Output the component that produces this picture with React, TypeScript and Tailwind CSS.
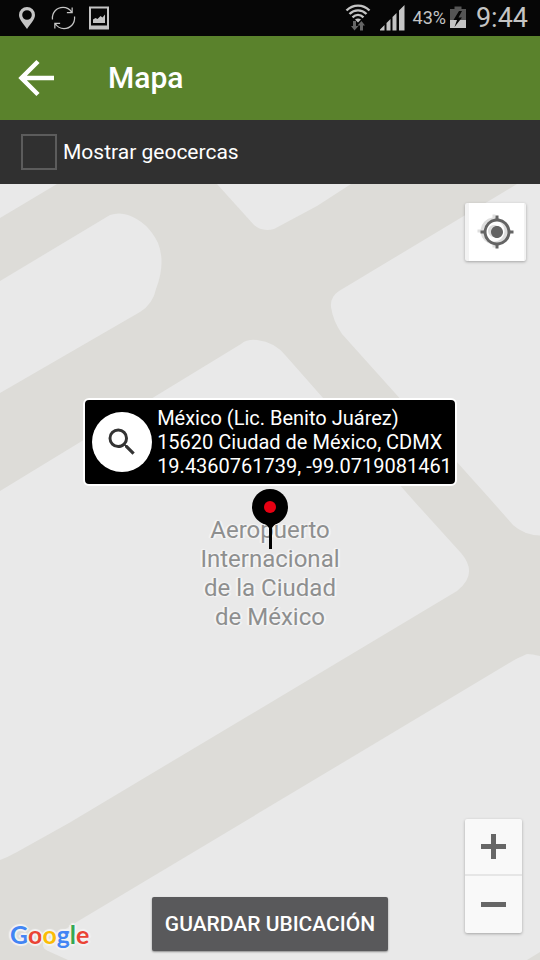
import React from "react";
import { MdMyLocation, MdSearch } from "react-icons/md";

function StatusBar() {
  return (
    <div className="flex h-9 shrink-0 items-center justify-between bg-[#060606] pr-3 pl-4 text-[#c4c4c4]">
      <div className="flex items-center gap-[13px]">
        <svg className="h-6 w-[22px]" viewBox="0 0 22 24" fill="currentColor" aria-hidden="true">
          <path
            fillRule="evenodd"
            d="M11 1a8 8 0 0 0-8 8c0 5 5 9 8 14 3-5 8-9 8-14a8 8 0 0 0-8-8Zm0 3.200a4.800 4.800 0 1 1 0 9.600a4.800 4.800 0 0 1 0-9.600Z"
          />
        </svg>
        <svg className="h-6 w-[25px]" viewBox="0 0 26 24" fill="none" stroke="currentColor" strokeWidth="1.300" aria-hidden="true">
          <path d="M1.500 13.500C.8 6 6 1 12.500 1c4 0 7 1.800 9 5M22 1v5.500h-5.500" />
          <path d="M24.500 10.500C25.200 18 20 23 13.500 23c-4 0-7-1.800-9-5M4 23v-5.500h5.500" />
        </svg>
        <svg className="h-6 w-5" viewBox="0 0 20 24" fill="currentColor" aria-hidden="true">
          <path fillRule="evenodd" d="M0 .5h20v23H0ZM2 2.500v17h16v-17Z" />
          <path d="M4 17v-3.500l2.500-1.500 2 1 3-3 2 1.500L16 8.500V17Z" />
        </svg>
      </div>
      <div className="flex items-center">
        <svg className="mr-2 h-7 w-[26px]" viewBox="0 0 26 28" fill="none" aria-hidden="true">
          <g stroke="currentColor" strokeWidth="2.400">
            <path d="M1.500 6.500c6.500-6.500 16.500-6.500 23 0" />
            <path d="M4.500 10c5-4.800 12-4.800 17 0" />
            <path d="M7.500 13.300c3.300-3 7.700-3 11 0" />
          </g>
          <path d="M10 15.500c2-1.500 4-1.500 6 0L13 18.500Z" fill="currentColor" />
          <path d="M8 17h3v5h2.500L9.500 26.500 6 22h2ZM15 26.500v-5h-2.500l4-4.500 3.500 4.500h-2v5Z" fill="#666" />
        </svg>
        <svg className="mr-2 h-[26px] w-[26px]" viewBox="0 0 26 26" fill="currentColor" aria-hidden="true">
          <path d="M1 25.500v-1L5.500 20v5.500ZM7.500 25.500V18l4-4v11.500ZM13.500 25.500V12l4-4v17.500ZM20 25.500V5.500L25.500 0v25.500Z" />
        </svg>
        <span className="mr-1 text-[18px] leading-9">43%</span>
        <svg className="mr-[10px] h-6 w-4" viewBox="0 0 16 24" aria-hidden="true">
          <path d="M0 3h4.500V.5h7V3H16v11H0Z" fill="#555" />
          <path d="M0 14h16v8H0Z" fill="#c4c4c4" />
          <path d="M9 5 3.500 14H7l-2.500 7L12 11.500H8.500L12 5Z" fill="#060606" />
        </svg>
        <span className="text-[27px] leading-9">9:44</span>
      </div>
    </div>
  );
}

function Terrain() {
  return (
    <svg
      className="absolute inset-0 h-full w-full"
      viewBox="0 184 540 776"
      preserveAspectRatio="xMidYMid slice"
      fill="#e9e9e9"
      aria-hidden="true"
    >
      <rect y="184" width="540" height="776" fill="#dddcd8" />
      <path d="M0 184H57L0 218Z" />
      <path d="M0 281 110 215Q119 212 128 215Q148 222 158 243Q166 263 156 289Q153 304 140 312L0 393Z" />
      <path d="M217 184 254 225Q262 232 274 229L317 206 351 184Z" />
      <path d="M517 184 339 291Q330 297 331 307Q333 321 342 334L491 500 513 525Q524 535 540 535.500V184Z" />
      <path d="M0 491 241 344Q247 339 257 340Q275 342 286 356L413 500 461 553Q479 574 457 591L69 823 17 852Q8 857 0 860Z" />
      <path d="M540 656Q532 654 527 654L516 659 80 920 43 943Q42 948 48 951L68 960H527L540 952Z" />
    </svg>
  );
}

const placeLines = ["Aeropuerto", "Internacional", "de la Ciudad", "de México"];

export default function App() {
  return (
    <div className="flex min-h-screen flex-col bg-[#e9e9e9] font-['Roboto',sans-serif]">
      <StatusBar />
      <header className="flex h-[84px] shrink-0 items-center gap-[52px] bg-[#5a822c] pl-[18px] text-white">
        <button type="button" aria-label="Atrás">
          <svg className="h-10 w-[38px]" viewBox="0 0 38 40" fill="none" stroke="currentColor" strokeWidth="4.500" aria-hidden="true">
            <path d="M36 20H3M20 3.500 3.500 20 20 36.500" />
          </svg>
        </button>
        <h1 className="text-[30px] leading-9 font-medium">Mapa</h1>
      </header>
      <div className="flex h-16 shrink-0 items-center bg-[#303030] pl-[21px] text-white">
        <label className="flex items-center gap-[6px] text-[21px] leading-6">
          <input type="checkbox" className="h-9 w-9 appearance-none border-2 border-[#5c5c5c] checked:bg-[#5a822c]" />
          Mostrar geocercas
        </label>
      </div>

      <main className="relative min-h-[640px] flex-1 overflow-hidden">
        <Terrain />

        <div className="absolute inset-x-0 top-[332px] text-center text-[24px] leading-[29px] text-[#8e8f8f] [text-shadow:0_0_2px_#f5f5f5,1px_1px_1px_#f5f5f5,-1px_-1px_1px_#f5f5f5,2px_0_1px_#f5f5f5,-2px_0_1px_#f5f5f5]">
          {placeLines.map((line) => (
            <div key={line}>{line}</div>
          ))}
        </div>

        <div className="absolute inset-x-0 top-[214px] flex flex-col items-center gap-[3px]">
          <div className="flex items-center gap-[5px] rounded-md border-2 border-white bg-black py-[6px] pr-[3px] pl-[7px] text-white">
            <button type="button" aria-label="Buscar" className="flex h-[60px] w-[60px] items-center justify-center rounded-full bg-white text-[#333]">
              <MdSearch size={36} />
            </button>
            <div className="text-[20px] leading-6 whitespace-nowrap">
              <p>México (Lic. Benito Juárez)</p>
              <p>15620 Ciudad de México, CDMX</p>
              <p>19.4360761739, -99.0719081461</p>
            </div>
          </div>
          <svg className="h-[60px] w-9" viewBox="0 0 36 60" role="img" aria-label="Ubicación">
            <circle cx="18" cy="18" r="18" />
            <path d="M9 33q6 2 8 6v21h3V39q2-4 8-6Z" />
            <circle cx="18" cy="18" r="6" fill="#e60012" />
          </svg>
        </div>

        <button
          type="button"
          aria-label="Mi ubicación"
          className="absolute top-[19px] right-[14px] flex h-[58px] w-[61px] items-center justify-center rounded-xs border-r-2 border-l-4 border-[#f3f3f3] bg-white text-[#646464] shadow-[0_1px_3px_#0000004d]"
        >
          <MdMyLocation size={36} className="absolute top-[10px] left-[7px] text-[#dedede]" />
          <MdMyLocation size={36} className="relative" />
        </button>

        <div className="absolute right-[18px] bottom-[27px] flex w-[57px] flex-col divide-y-2 divide-[#e6e6e6] rounded-xs bg-[#f9f9f9] text-[#666] shadow-[0_1px_3px_#0000004d]">
          <button type="button" aria-label="Acercar" className="flex h-[57px] items-center justify-center">
            <svg className="h-[25px] w-[25px]" viewBox="0 0 25 25" fill="currentColor" aria-hidden="true">
              <path d="M10 0h5v10h10v5H15v10h-5V15H0v-5h10Z" />
            </svg>
          </button>
          <button type="button" aria-label="Alejar" className="flex h-[57px] items-center justify-center">
            <svg className="h-[25px] w-[25px]" viewBox="0 0 25 25" fill="currentColor" aria-hidden="true">
              <path d="M0 10h25v5H0Z" />
            </svg>
          </button>
        </div>

        <div className="absolute inset-x-0 bottom-[9px] flex justify-center">
          <button type="button" className="h-[54px] rounded-xs bg-[#59595b] px-[13px] text-[21px] leading-6 font-medium text-white shadow-[0_1px_2px_#00000066]">
            GUARDAR UBICACIÓN
          </button>
        </div>

        <div className="absolute bottom-[10px] left-[10px] font-['Lato',sans-serif] text-[25px] leading-8 font-bold [text-shadow:0_0_2px_#f3f3f3,2px_0_1px_#f3f3f3,-2px_0_1px_#f3f3f3,0_2px_1px_#f3f3f3,0_-2px_1px_#f3f3f3]">
          <span className="text-[#4285f4]">G</span>
          <span className="text-[#ea4335]">o</span>
          <span className="text-[#fbbc05]">o</span>
          <span className="text-[#4285f4]">g</span>
          <span className="text-[#34a853]">l</span>
          <span className="text-[#ea4335]">e</span>
        </div>
      </main>
    </div>
  );
}
